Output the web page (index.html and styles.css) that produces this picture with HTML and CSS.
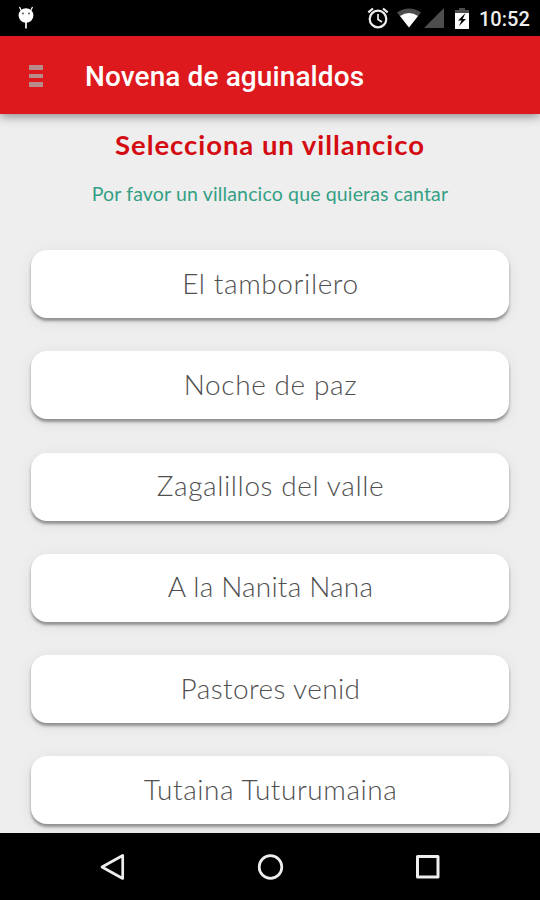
FILE: index.html
```html
<!DOCTYPE html>
<html lang="es">
<head>
    <meta charset="UTF-8">
    <meta name="viewport" content="width=device-width, initial-scale=1.0">
    <title>Novena de aguinaldos</title>
    <link rel="stylesheet" href="styles.css">
</head>
<body>
    <div class="status-bar">
        <svg class="debug-icon" width="18" height="24" viewBox="0 0 18 24">
            <path d="M4 4L2.500 1M14 4l1.500-3" stroke="#fff" stroke-width="1.300"/>
            <ellipse cx="9" cy="9.500" rx="7.400" ry="7.300" fill="#fff"/>
            <path d="M9 16v6.500" stroke="#fff" stroke-width="1.700"/>
            <circle cx="6" cy="7.500" r="1" fill="#555"/>
            <circle cx="12" cy="7.500" r="1" fill="#555"/>
        </svg>
        <div class="status-icons">
            <svg width="22" height="22" viewBox="0 0 22 22" fill="none" stroke="#eee">
                <circle cx="11" cy="12" r="8.300" stroke-width="2.200"/>
                <path d="M1.300 5.300L6 1.500M20.700 5.300L16 1.500" stroke-width="2.200"/>
                <path d="M11 7v5.500l4 2.500" stroke-width="1.700"/>
            </svg>
            <svg class="wifi-icon" width="24" height="20" viewBox="0 0 24 20">
                <path d="M0 4.500Q12-3.500 24 4.500L12 19.500z" fill="#4d4d4d"/>
                <path d="M3 8Q12 2 21 8L12 19.500z" fill="#fff"/>
            </svg>
            <svg class="signal-icon" width="20" height="20" viewBox="0 0 20 20">
                <path d="M20 0v20H0z" fill="#4d4d4d"/>
            </svg>
            <svg class="battery-icon" width="14" height="21" viewBox="0 0 14 21">
                <path d="M4 0h6v2h4v4H0V2h4z" fill="#4d4d4d"/>
                <path d="M0 5h14v16H0z" fill="#fff"/>
                <path d="M10.500 5L3 12.500h3.500L4 18l7-7H7.700z" fill="#000"/>
            </svg>
            <span class="clock">10:52</span>
        </div>
    </div>

    <header class="toolbar">
        <div class="menu-icon">
            <span></span>
            <span></span>
            <span></span>
        </div>
        <h1>Novena de aguinaldos</h1>
    </header>

    <main class="content">
        <h2>Selecciona un villancico</h2>
        <p class="hint">Por favor un villancico que quieras cantar</p>
        <div class="song-list">
            <button class="song">El tamborilero</button>
            <button class="song">Noche de paz</button>
            <button class="song">Zagalillos del valle</button>
            <button class="song nanita">A la Nanita Nana</button>
            <button class="song pastores">Pastores venid</button>
            <button class="song tutaina">Tutaina Tuturumaina</button>
        </div>
    </main>

    <nav class="nav-bar">
        <svg width="28" height="30" viewBox="0 0 28 30" fill="none" stroke="#eee" stroke-width="2.700" stroke-linejoin="round">
            <path d="M23.700 3.500v23L3 15z"/>
        </svg>
        <svg width="28" height="30" viewBox="0 0 28 30" fill="none" stroke="#eee" stroke-width="2.700">
            <circle cx="14.500" cy="15" r="11.300"/>
        </svg>
        <svg width="28" height="30" viewBox="0 0 28 30" fill="none" stroke="#eee" stroke-width="3" stroke-linejoin="round">
            <path d="M4.500 4.500h20.500v20.500h-20.500z"/>
        </svg>
    </nav>
</body>
</html>
```
FILE: styles.css
```css
body {
    margin: 0;
    height: 900px;
    display: flex;
    flex-direction: column;
    overflow: hidden;
    background: #eee;
    font-family: Lato, sans-serif;
}

.status-bar {
    height: 36px;
    flex: none;
    display: flex;
    justify-content: space-between;
    align-items: center;
    padding: 0 10px 0 17px;
    background: #000;
}

.status-icons {
    display: flex;
    align-items: center;
}

.wifi-icon {
    margin-left: 8px;
}

.signal-icon {
    margin-left: 3px;
}

.battery-icon {
    margin-left: 11px;
}

.clock {
    margin: 2px 0 0 10px;
    width: 51px;
    font: 500 20px/24px Roboto, sans-serif;
    color: #eee;
    white-space: nowrap;
}

.toolbar {
    height: 78px;
    flex: none;
    display: flex;
    align-items: center;
    padding-left: 29px;
    box-sizing: border-box;
    background: #dd191d;
    box-shadow: 0 2px 10px rgba(0, 0, 0, 0.45);
    z-index: 1;
}

.menu-icon {
    display: flex;
    flex-direction: column;
    gap: 4px;
    width: 14px;
    margin-right: 42px;
    padding-top: 2px;
}

.menu-icon span {
    height: 4.5px;
    background: #ba8b8b;
}

h1 {
    margin: 4px 0 0;
    font: 500 28px/32px Roboto, sans-serif;
    letter-spacing: 0.1px;
    color: #fff;
    white-space: nowrap;
}

.content {
    height: 719px;
    flex: none;
    box-sizing: border-box;
    padding: 15px 31px 0;
    overflow: hidden;
    text-align: center;
}

h2 {
    margin: 0;
    font-size: 27.5px;
    line-height: 32px;
    font-weight: 700;
    letter-spacing: 0.95px;
    color: #d40c12;
}

.hint {
    margin: 20px 0 0;
    font-size: 19.5px;
    line-height: 26px;
    letter-spacing: 0.15px;
    color: #34a085;
}

.song-list {
    display: flex;
    flex-direction: column;
    gap: 33.3px;
    margin-top: 43px;
}

.song {
    height: 68px;
    flex: none;
    padding: 0 0 3px 1px;
    border: none;
    border-radius: 16px;
    background: #fff;
    box-shadow: 0 3px 3px rgba(0, 0, 0, 0.36), 0 3px 14px rgba(0, 0, 0, 0.08);
    font-family: Lato, sans-serif;
    font-size: 28px;
    font-weight: 300;
    letter-spacing: 0.6px;
    color: #505050;
}

.nanita {
    letter-spacing: 0.2px;
}

.pastores {
    letter-spacing: 0.4px;
}

.tutaina {
    letter-spacing: 0.55px;
}

.nav-bar {
    height: 67px;
    flex: none;
    box-sizing: border-box;
    display: flex;
    justify-content: center;
    align-items: center;
    gap: 129px;
    background: #000;
}
```
